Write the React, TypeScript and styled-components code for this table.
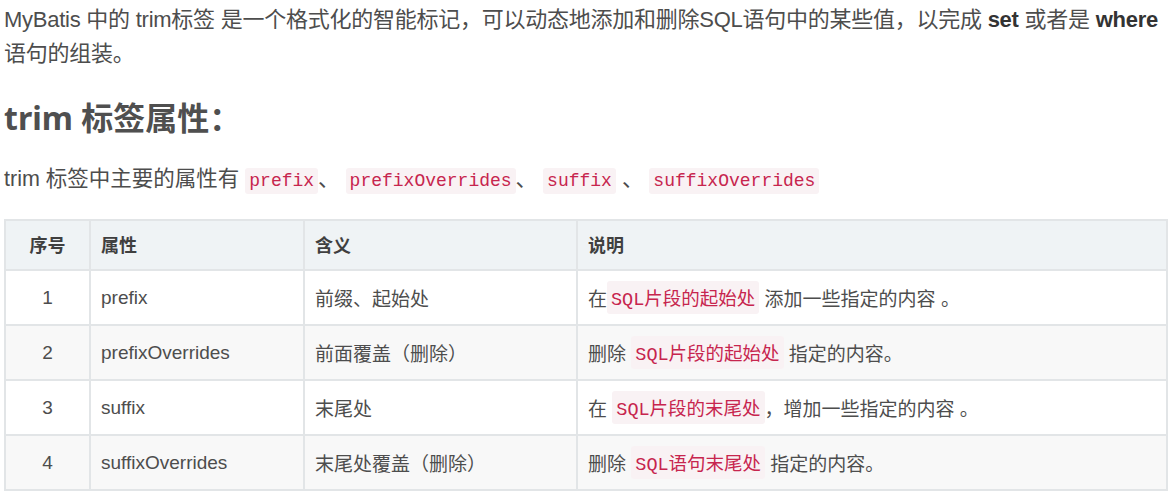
import React from 'react';
import styled, {createGlobalStyle} from 'styled-components';

const GlobalStyle = createGlobalStyle`
  body {
    margin: 0;
    background: #ffffff;
    font-family: "Liberation Sans", "Noto Sans CJK SC", sans-serif;
    color: #4d4d4d;
  }
`;

const Page = styled.div`
  padding: 3px 4px 0 4px;
  width: 1164px;
`;

const Intro = styled.p`
  margin: 0;
  font-size: 22px;
  line-height: 34px;
  letter-spacing: -0.25px;
`;

const Line = styled.span`
  white-space: nowrap;
`;

const Strong = styled.b`
  color: #333333;
`;

const Heading = styled.h2`
  margin: 25px 0 0 0;
  font-family: "Noto Sans", "Noto Sans CJK SC", sans-serif;
  font-weight: 700;
  font-size: 32px;
  line-height: 44px;
  color: #4f4f4f;
`;

const Lead = styled.p`
  margin: 22px 0 0 0;
  font-size: 21.5px;
  line-height: 34px;
`;

const Code = styled.code<{$size?: number}>`
  font-family: "Liberation Mono", "Noto Sans CJK SC", monospace;
  font-size: ${(p) => p.$size || 18}px;
  color: #c7254e;
  background: #f9f2f4;
  border-radius: 3px;
  padding: 3px 4px;
`;

const Table = styled.div`
  margin-top: 21px;
  display: grid;
  grid-template-columns: 85px 214px 273px 1fr;
  grid-template-rows: 50px;
  grid-auto-rows: 55px;
  border-top: 2px solid #e2e5e7;
  border-left: 2px solid #e2e5e7;
`;

const Cell = styled.div<{$center?: boolean; $bg?: string}>`
  display: flex;
  align-items: center;
  justify-content: ${(p) => (p.$center ? 'center' : 'flex-start')};
  padding: 0 10px;
  border-right: 2px solid #e2e5e7;
  border-bottom: 2px solid #e2e5e7;
  background: ${(p) => p.$bg || '#ffffff'};
  font-size: 19px;
  color: #4d4d4d;
  white-space: pre;
`;

const HeadCell = styled(Cell)`
  background: #eff3f5;
  font-weight: 700;
  font-size: 18px;
  color: #3f3f3f;
  padding-bottom: 2px;
`;

const headers = ['序号', '属性', '含义', '说明'];

const rows = [
    {
        no: '1',
        name: 'prefix',
        meaning: '前缀、起始处',
        desc: ['在', 'SQL片段的起始处', ' 添加一些指定的内容 。'],
    },
    {
        no: '2',
        name: 'prefixOverrides',
        meaning: '前面覆盖（删除）',
        desc: ['删除 ', 'SQL片段的起始处', ' 指定的内容。'],
    },
    {
        no: '3',
        name: 'suffix',
        meaning: '末尾处',
        desc: ['在 ', 'SQL片段的末尾处', '，增加一些指定的内容 。'],
    },
    {
        no: '4',
        name: 'suffixOverrides',
        meaning: '末尾处覆盖（删除）',
        desc: ['删除 ', 'SQL语句末尾处', ' 指定的内容。'],
    },
];

const App: React.FC = () => {
    return (
        <Page>
            <GlobalStyle/>
            <Intro>
                <Line>
                    MyBatis 中的 trim标签 是一个格式化的智能标记，可以动态地添加和删除SQL语句中的某些值，以完成 <Strong>set</Strong> 或者是 <Strong>where</Strong>
                </Line>
                <br/>
                语句的组装。
            </Intro>

            <Heading>trim 标签属性：</Heading>

            <Lead>
                trim 标签中主要的属性有 <Code>prefix</Code>、 <Code>prefixOverrides</Code>、 <Code>suffix</Code> 、 <Code>suffixOverrides</Code>
            </Lead>

            <Table>
                {headers.map((h, i) => (
                    <HeadCell key={h} $center={i === 0}>{h}</HeadCell>
                ))}
                {rows.map((row, index) => {
                    const bg = index % 2 === 1 ? '#f8f8f8' : '#ffffff';
                    return (
                        <React.Fragment key={row.no}>
                            <Cell $center $bg={bg}>{row.no}</Cell>
                            <Cell $bg={bg}>{row.name}</Cell>
                            <Cell $bg={bg}>{row.meaning}</Cell>
                            <Cell $bg={bg}>
                                {row.desc[0]}
                                <Code $size={18.5}>{row.desc[1]}</Code>
                                {row.desc[2]}
                            </Cell>
                        </React.Fragment>
                    );
                })}
            </Table>
        </Page>
    );
};

export default App;
